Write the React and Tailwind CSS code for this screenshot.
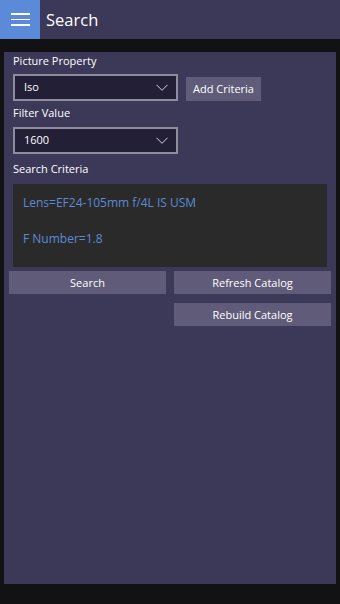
import React from 'react';

const Chevron = () => (
  <svg width="12" height="7" viewBox="0 0 12 7" fill="none" stroke="#d8d6e2" strokeWidth="1">
    <path d="M0.5 0.8l5.5 5.5 5.5-5.5" />
  </svg>
);

const Dropdown = ({ value }) => (
  <div className="w-[165px] h-[27px] border-2 border-[#8e8b9c] bg-[#221f37] flex items-center justify-between pl-[9px] pr-[8px]">
    <span className="text-[11px] text-white">{value}</span>
    <Chevron />
  </div>
);

const Btn = ({ children, className = '' }) => (
  <button className={`h-[23px] bg-[#5f5b79] text-[11px] text-white flex items-center justify-center pt-[1px] ${className}`}>
    {children}
  </button>
);

const App = () => {
  return (
    <div className="w-[340px] h-[604px] bg-[#121214] flex flex-col" style={{ fontFamily: '"Open Sans", "Noto Sans", sans-serif' }}>
      {/* Barra superior */}
      <div className="h-[39px] bg-[#3c3858] flex items-center shrink-0">
        <div className="w-[40px] h-[39px] bg-[#5b8ad8] flex flex-col items-center justify-center gap-[4px]">
          <span className="block w-[19px] h-[1.5px] bg-white" />
          <span className="block w-[19px] h-[1.5px] bg-white" />
          <span className="block w-[19px] h-[1.5px] bg-white" />
        </div>
        <span className="ml-[6px] text-[16.5px] text-white pt-[2px]">Search</span>
      </div>

      {/* Panel */}
      <div className="mt-[13px] mx-[4px] h-[532px] bg-[#3c3858] pt-[1px]">
        <p className="pl-[9px] text-[11px] text-white leading-[16px]">Picture Property</p>
        <div className="mt-[5px] ml-[9px] flex items-end gap-[8px]">
          <Dropdown value="Iso" />
          <Btn className="w-[75px] h-[24px]">Add Criteria</Btn>
        </div>
        <p className="mt-[4px] pl-[9px] text-[11px] text-white leading-[16px]">Filter Value</p>
        <div className="mt-[6px] ml-[9px]">
          <Dropdown value="1600" />
        </div>
        <p className="mt-[7px] pl-[9px] text-[11px] text-white leading-[16px]">Search Criteria</p>
        <div className="mt-[7px] ml-[9px] w-[314px] h-[83px] bg-[#2a2a2a] px-[10px] pt-[10px] text-[12px] text-[#5b8ad8] leading-[18px]">
          <p>Lens=EF24-105mm f/4L IS USM</p>
          <p className="mt-[18px]">F Number=1.8</p>
        </div>
        <div className="mt-[4px] ml-[5px] grid grid-cols-[157px_157px] gap-x-[8px] gap-y-[9px]">
          <Btn>Search</Btn>
          <Btn>Refresh Catalog</Btn>
          <div />
          <Btn>Rebuild Catalog</Btn>
        </div>
      </div>
    </div>
  );
};

export default App;
